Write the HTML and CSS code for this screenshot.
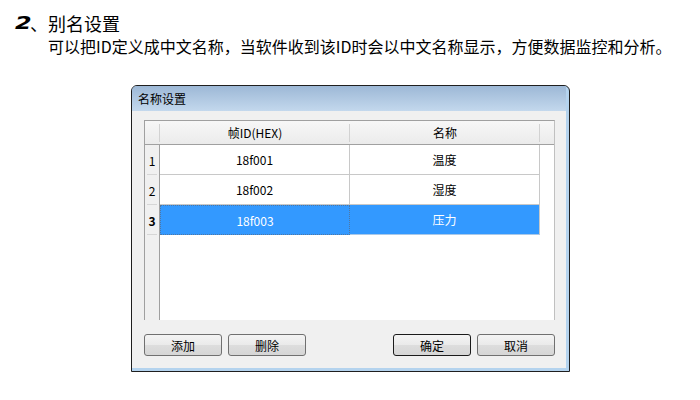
FILE: index.html
```html
<!DOCTYPE html>
<html>
<head>
<meta charset="utf-8">
<link rel="stylesheet" href="styles.css">
</head>
<body>
<div class="doc">
  <h2 class="heading"><span class="num">2</span><span class="htext">、别名设置</span></h2>
  <p class="desc">可以把ID定义成中文名称，当软件收到该ID时会以中文名称显示，方便数据监控和分析。</p>
  <div class="win">
    <div class="titlebar">名称设置</div>
    <div class="body">
      <div class="tbl">
        <div class="hc corner"></div>
        <div class="hc">帧ID(HEX)</div>
        <div class="hc">名称</div>
        <div class="hc last"></div>

        <div class="rn">1</div>
        <div class="cell">18f001</div>
        <div class="cell">温度</div>
        <div class="blank"></div>

        <div class="rn">2</div>
        <div class="cell">18f002</div>
        <div class="cell">湿度</div>
        <div class="blank"></div>

        <div class="rn cur">3</div>
        <div class="cell sel focus">18f003</div>
        <div class="cell sel">压力</div>
        <div class="blank"></div>

        <div class="rn fill"></div>
        <div class="empty"></div>
      </div>
      <div class="btns">
        <div class="grp">
          <button class="btn">添加</button>
          <button class="btn">删除</button>
        </div>
        <div class="grp">
          <button class="btn def">确定</button>
          <button class="btn">取消</button>
        </div>
      </div>
    </div>
  </div>
</div>
</body>
</html>
```

FILE: styles.css
```css
* { box-sizing: border-box; }

body {
  margin: 0;
  background: #ffffff;
  color: #000000;
  font-family: "Noto Sans CJK SC", sans-serif;
}

.doc {
  padding: 12px 0 0 15px;
}

.heading {
  margin: 0;
  height: 22px;
  display: flex;
  align-items: baseline;
  font-size: 18px;
  font-weight: normal;
  line-height: 22px;
}

.num {
  display: inline-block;
  width: 15px;
  font-family: "DejaVu Sans", sans-serif;
  font-weight: bold;
  font-style: italic;
  font-size: 17px;
  transform: translateY(-2px) scaleX(1.4);
  transform-origin: left center;
}

.desc {
  margin: 2px 0 0 33px;
  font-size: 16px;
  line-height: 20px;
}

.win {
  width: 439px;
  margin: 29px 0 0 116px;
  border: 1px solid #1f1f1f;
  border-radius: 6px 6px 0 0;
  overflow: hidden;
  background: #b4d3ee;
  padding: 0 3px 3px 0;
}

.titlebar {
  height: 25px;
  line-height: 25px;
  padding-left: 6px;
  font-size: 12px;
  background: linear-gradient(#9db8d6, #c3d8ed);
}

.body {
  background: #f0f0f0;
  padding: 9px 11px 12px 12px;
}

.tbl {
  display: grid;
  grid-template-columns: 15px 190px 190px 1fr;
  grid-template-rows: 24px 30px 30px 30px 1fr;
  height: 200px;
  background: #ffffff;
  border-top: 1px solid #a0a0a0;
  border-left: 1px solid #a0a0a0;
  border-right: 1px solid #c0c0c0;
  font-size: 12px;
}

.hc {
  display: flex;
  align-items: center;
  justify-content: center;
  border-bottom: 1px solid #a0a0a0;
  background:
    linear-gradient(#d2d2d2, #d2d2d2) right center / 1px 18px no-repeat,
    linear-gradient(#f7f7f7, #ebebeb);
}

.hc.last {
  background: linear-gradient(#f7f7f7, #ebebeb);
}

.rn {
  display: flex;
  align-items: center;
  justify-content: center;
  border-right: 1px solid #a0a0a0;
  background:
    linear-gradient(#d6d6d6, #d6d6d6) center bottom / 10px 1px no-repeat,
    #f0f0f0;
}

.rn.cur {
  font-weight: bold;
}

.rn.fill {
  background: #f0f0f0;
}

.cell {
  display: flex;
  align-items: center;
  justify-content: center;
  border-right: 1px solid #c8c8c8;
  border-bottom: 1px solid #c8c8c8;
}

.cell.sel {
  background: #3399ff;
  color: #ffffff;
  border-bottom-color: #a9c8e8;
}

.cell.focus {
  border: 1px dotted #4f77a3;
}

.blank {
  background: #ffffff;
}

.empty {
  grid-column: 2 / 5;
  background: #ffffff;
}

.btns {
  display: flex;
  justify-content: space-between;
  margin-top: 14px;
}

.grp {
  display: flex;
  gap: 6px;
}

.btn {
  width: 78px;
  height: 22px;
  padding: 0;
  border: 1px solid #707070;
  border-radius: 3px;
  background: linear-gradient(#f4f4f4, #eaeaea 50%, #dddddd 51%, #d6d6d6);
  font-family: "Noto Sans CJK SC", sans-serif;
  font-size: 12px;
  color: #000000;
}

.btn.def {
  border-color: #1b1b1b;
}
```
